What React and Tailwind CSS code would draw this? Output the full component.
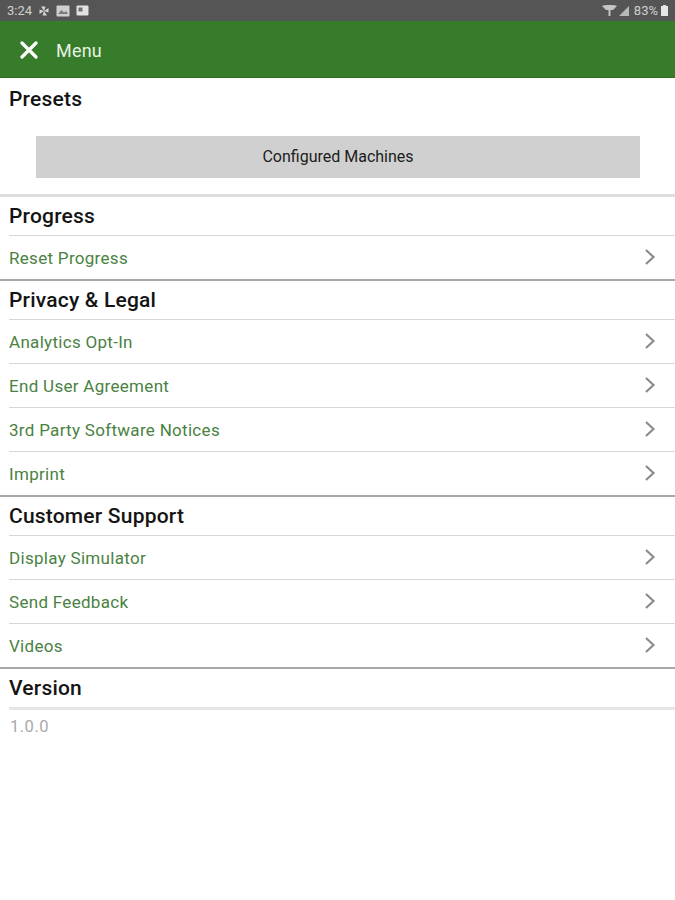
const font = { fontFamily: 'Roboto, sans-serif' };

function Chevron() {
  return (
    <svg width="12" height="18" viewBox="0 0 12 18" fill="none" stroke="#8c8c8c" strokeWidth="2.2" className="block mb-[4px]">
      <path d="M2 2 L9.5 9 L2 16" />
    </svg>
  );
}

function Heading({ children, h = 'h-[38px]' }) {
  return (
    <div className={`${h} pl-[9px] pt-[2px] flex items-center text-[21px] font-medium text-[#141414] tracking-[0.2px]`}>
      {children}
    </div>
  );
}

function Row({ label, last }) {
  return (
    <div className={`h-[44px] ml-[9px] pt-[2px] pr-[19px] flex items-center justify-between border-b ${last ? 'border-transparent' : 'border-[#d6d6d6]'}`}>
      <span className="text-[17px] text-[#4a8242] tracking-[0.3px]">{label}</span>
      <Chevron />
    </div>
  );
}

function Section({ title, items }) {
  return (
    <div className="border-b-2 border-[#a8a8a8]">
      <Heading>{title}</Heading>
      <div className="ml-[9px] border-t border-[#d6d6d6]" />
      <div className="-mb-px">
        {items.map((t, i) => <Row key={t} label={t} last={i === items.length - 1} />)}
      </div>
    </div>
  );
}

export default function App() {
  return (
    <div style={font} className="w-[675px] h-[900px] bg-white flex flex-col overflow-hidden">
      <div className="h-[21px] bg-[#555555] flex items-center justify-between pl-[7px] pr-[7px] text-[13px] text-[#d0d0d0]">
        <div className="flex items-center gap-[6px]">
          <span>3:24</span>
          <svg width="12" height="12" viewBox="0 0 12 12" fill="#d4d4d4"><path d="M6 6L3 1.5h4.5zM6 6l4.5-3v4.5zM6 6l3 4.5H4.5zM6 6l-4.5 3V4.5z" /></svg>
          <svg width="14" height="12" viewBox="0 0 14 12"><rect x="0.5" y="0.5" width="13" height="11" rx="1" fill="#cfcfcf" /><path d="M2 9l3.5-4 2.5 2.5L10 6l2 3z" fill="#7a7a7a" /></svg>
          <svg width="13" height="11" viewBox="0 0 13 11"><rect x="0.5" y="0.5" width="12" height="10" rx="1" fill="#e2e2e2" /><rect x="2.5" y="2.5" width="4" height="4" fill="#707070" /></svg>
        </div>
        <div className="flex items-center gap-[2px]">
          <svg width="15" height="11" viewBox="0 0 15 11" fill="#c4c4c4"><path d="M0 1c4-1.5 11-1.5 15 0L11 5H4z" /><rect x="6.5" y="5" width="2" height="6" /></svg>
          <svg width="10" height="10" viewBox="0 0 10 10" fill="#b8b8b8"><path d="M10 0v10H0z" /></svg>
          <span className="ml-[3px]">83%</span>
          <svg width="7" height="11" viewBox="0 0 7 11" fill="#e6e6e6" className="ml-px"><path d="M2 0h3v1h2v10H0V1h2z" /></svg>
        </div>
      </div>

      <div className="h-[57px] bg-[#367c2b] flex items-center pl-[20px] border-b border-[#2f7026]">
        <svg width="18" height="18" viewBox="0 0 18 18" stroke="#ffffff" strokeWidth="3.2" strokeLinecap="round" className="mt-[2px]">
          <path d="M2 2 L16 16 M16 2 L2 16" />
        </svg>
        <span className="ml-[18px] pt-[2px] text-[18px] text-[#e6f2e2] tracking-[0.2px]">Menu</span>
      </div>

      <Heading h="h-[42px]">Presets</Heading>
      <div className="pl-[36px] pr-[35px] pt-[16px] pb-[16px] border-b-[3px] border-[#dedede]">
        <div className="h-[42px] bg-[#d0d0d0] flex items-center justify-center text-[16px] text-[#1c1c1c]">
          Configured Machines
        </div>
      </div>

      <Section title="Progress" items={['Reset Progress']} />
      <Section title="Privacy & Legal" items={['Analytics Opt-In', 'End User Agreement', '3rd Party Software Notices', 'Imprint']} />
      <Section title="Customer Support" items={['Display Simulator', 'Send Feedback', 'Videos']} />

      <Heading>Version</Heading>
      <div className="ml-[9px] h-[3px] bg-[#e6e6e6]" />
      <div className="pl-[10px] pt-[5px] text-[16.5px] text-[#a9a9a9] tracking-[0.5px]">1.0.0</div>
    </div>
  );
}
